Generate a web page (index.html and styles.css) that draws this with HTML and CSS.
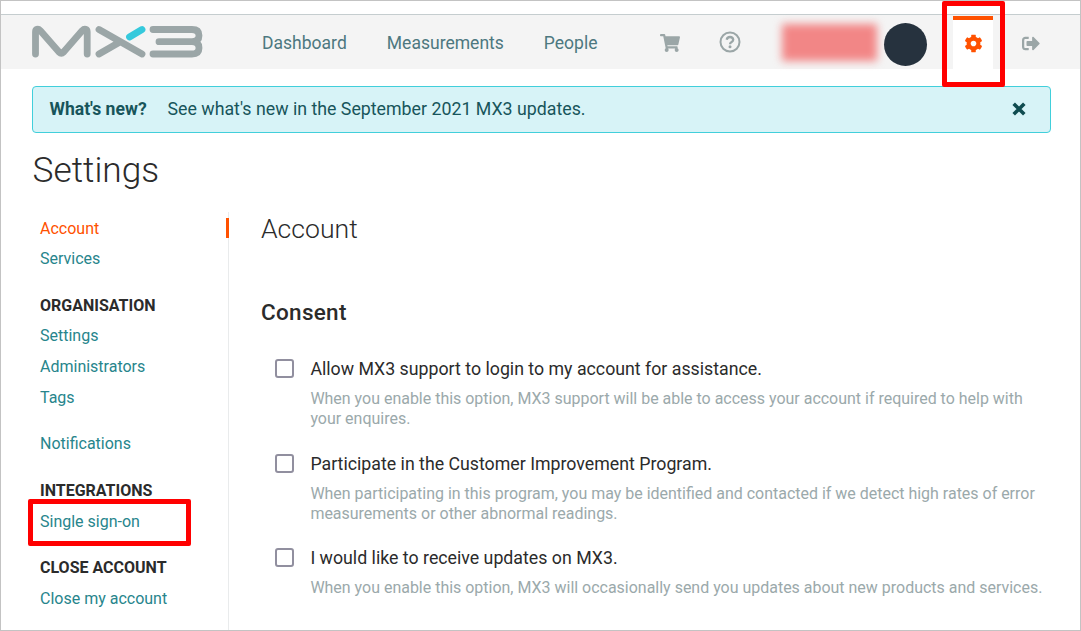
FILE: index.html
```html
<!DOCTYPE html>
<html lang="en">
<head>
<meta charset="utf-8">
<title>MX3 – Settings</title>
<link rel="stylesheet" href="styles.css">
</head>
<body>
<div class="frame">
  <header class="topbar">
    <svg class="logo" width="172" height="34" viewBox="0 0 172 34" fill="none" stroke="#9ba6a7" stroke-width="6.800" stroke-linecap="round" stroke-linejoin="round">
      <path d="M3.500 29V7C3.500 4 6 3.200 8.200 5.500L27 27Q29.300 29.300 31.600 27L50.300 5.500C52.500 3.200 55.200 4 55.200 7V29"/>
      <path d="M67 4.500L110 29M67 29L87 17.500"/>
      <path d="M97.500 12L110 4.500" stroke="#35c9dc"/>
      <path d="M121 4.500H160Q167 4.500 167 10.500Q167 16.700 160 16.700H127M160 16.700Q167 16.700 167 23Q167 29 160 29H121"/>
    </svg>
    <nav class="nav">
      <a class="dashboard">Dashboard</a>
      <a class="measurements">Measurements</a>
      <a class="people">People</a>
    </nav>
    <div class="tools">
      <svg class="cart" width="20" height="18" viewBox="0 0 576 512" fill="#9ba6a7"><path d="M528.120 301.319l47.273-208C578.806 78.301 567.391 64 551.990 64H159.208l-9.166-44.810C147.758 8.021 137.930 0 126.529 0H24C10.745 0 0 10.745 0 24v16c0 13.255 10.745 24 24 24h69.883l70.248 343.435C147.325 417.100 136 435.222 136 456c0 30.928 25.072 56 56 56s56-25.072 56-56c0-15.674-6.447-29.835-16.824-40h209.647C430.447 426.165 424 440.326 424 456c0 30.928 25.072 56 56 56s56-25.072 56-56c0-22.172-12.888-41.332-31.579-50.405l5.517-24.276c3.413-15.018-8.002-29.319-23.403-29.319H218.117l-6.545-32h293.145c11.206 0 20.920-7.754 23.403-18.681z"/></svg>
      <svg class="help" width="22" height="22" viewBox="0 0 22 22" fill="none" stroke="#9ba6a7" stroke-width="2"><circle cx="11" cy="11" r="9.500"/><path stroke-width="2.300" d="M7.700 8.700Q8.200 6 11 6T14.200 8.700Q14.200 10 12.600 11Q11 11.900 11 13.300"/><circle cx="11" cy="15.700" r="1.500" fill="#9ba6a7" stroke="none"/></svg>
      <div class="username"></div>
      <div class="avatar"></div>
      <div class="tab">
        <svg width="17" height="19" viewBox="18 8 476 496" fill="#ff5100"><path d="M487.400 315.700l-42.600-24.600c4.300-23.200 4.300-47 0-70.200l42.600-24.600c4.900-2.800 7.100-8.600 5.500-14-11.100-35.600-30-67.800-54.700-94.600-3.800-4.100-10-5.100-14.800-2.300L380.800 110c-17.900-15.400-38.500-27.300-60.800-35.100V25.800c0-5.600-3.900-10.500-9.400-11.700-36.700-8.200-74.300-7.800-109.200 0-5.500 1.200-9.400 6.100-9.400 11.700V75c-22.200 7.900-42.800 19.800-60.800 35.100L88.700 85.500c-4.900-2.800-11-1.900-14.800 2.300-24.700 26.700-43.600 58.900-54.700 94.600-1.700 5.400.6 11.200 5.500 14L67.300 221c-4.300 23.200-4.300 47 0 70.200l-42.600 24.600c-4.900 2.800-7.100 8.600-5.500 14 11.100 35.600 30 67.800 54.700 94.600 3.800 4.100 10 5.100 14.800 2.300l42.600-24.600c17.900 15.400 38.500 27.300 60.800 35.100v49.200c0 5.600 3.900 10.500 9.400 11.700 36.700 8.200 74.300 7.800 109.200 0 5.500-1.200 9.400-6.100 9.400-11.700v-49.200c22.200-7.900 42.800-19.800 60.800-35.100l42.600 24.600c4.900 2.800 11 1.900 14.800-2.300 24.700-26.700 43.600-58.900 54.700-94.600 1.500-5.500-.7-11.300-5.600-14.100zM256 336c-44.100 0-80-35.900-80-80s35.900-80 80-80 80 35.900 80 80-35.900 80-80 80z"/></svg>
      </div>
      <svg class="exit" width="18" height="15" viewBox="0 64 512 384" fill="#9ba6a7"><path d="M497 273L329 441c-15 15-41 4.500-41-17v-96H152c-13.300 0-24-10.700-24-24v-96c0-13.300 10.700-24 24-24h136V88c0-21.400 25.900-32 41-17l168 168c9.300 9.400 9.300 24.600 0 34zM192 436v-40c0-6.600-5.400-12-12-12H96c-17.700 0-32-14.300-32-32V160c0-17.700 14.300-32 32-32h84c6.600 0 12-5.400 12-12V76c0-6.600-5.400-12-12-12H96c-53 0-96 43-96 96v192c0 53 43 96 96 96h84c6.600 0 12-5.400 12-12z"/></svg>
    </div>
  </header>
  <div class="notice">
    <strong>What's new?</strong>
    <span>See what's new in the September 2021 MX3 updates.</span>
    <svg class="close" width="14" height="14" viewBox="0 0 14 14" stroke="#0f4c50" stroke-width="3.600"><path d="M1.700 1.700L12.300 12.300M12.300 1.700L1.700 12.300"/></svg>
  </div>
  <h1>Settings</h1>
  <div class="columns">
    <aside class="side">
      <ul><li class="active"><a>Account</a></li><li><a>Services</a></li></ul>
      <ul><li class="head">ORGANISATION</li><li><a>Settings</a></li><li><a>Administrators</a></li><li><a>Tags</a></li></ul>
      <ul><li><a>Notifications</a></li></ul>
      <ul><li class="head">INTEGRATIONS</li><li><a>Single sign-on</a></li></ul>
      <ul><li class="head">CLOSE ACCOUNT</li><li><a>Close my account</a></li></ul>
    </aside>
    <main class="content">
      <h2>Account</h2>
      <h3>Consent</h3>
      <section class="option">
        <i class="box"></i>
        <div><h4>Allow MX3 support to login to my account for assistance.</h4>
        <p>When you enable this option, MX3 support will be able to access your account if required to help with<br>your enquires.</p></div>
      </section>
      <section class="option">
        <i class="box"></i>
        <div><h4>Participate in the Customer Improvement Program.</h4>
        <p>When participating in this program, you may be identified and contacted if we detect high rates of error<br>measurements or other abnormal readings.</p></div>
      </section>
      <section class="option">
        <i class="box"></i>
        <div><h4>I would like to receive updates on MX3.</h4>
        <p>When you enable this option, MX3 will occasionally send you updates about new products and services.</p></div>
      </section>
    </main>
  </div>
  <div class="mark mark-gear"></div>
  <div class="mark mark-sso"></div>
</div>
</body>
</html>
```
FILE: styles.css
```css
* { box-sizing: border-box; }
body { margin: 0; font-family: Roboto, "Liberation Sans", sans-serif; color: #2b2b2b; background: #fff; }
h1, h2, h3, h4, p, ul { margin: 0; padding: 0; font-weight: 400; white-space: nowrap; }
svg { display: block; flex: none; }
.frame { position: relative; width: 1081px; height: 631px; border: 1px solid #c3c3c3; padding-top: 13px; overflow: hidden; }

.topbar { display: flex; height: 55px; background: #f4f4f4; border-top: 1px solid #c5cdcf; padding-left: 31px; }
.logo { margin-top: 10px; }
.nav { display: flex; flex: none; width: 425px; padding-left: 58px; gap: 40px; line-height: 56px; font-size: 17.550px; color: #4d7880; }
.tools { display: flex; flex: none; }
.cart { margin: 19px 0 0 31px; }
.help { margin: 16px 0 0 39px; }
.username { width: 95px; height: 37px; margin: 9px 0 0 41px; background: #f28686; filter: blur(4px); }
.avatar { width: 43px; height: 43px; margin: 8px 0 0 6.500px; border-radius: 50%; background: #26323e; }
.tab { width: 40px; height: 54px; margin: 1px 0 0 26.500px; padding: 13.500px 0 0 12px; background: #fff; border-top: 4px solid #ff5100; }
.exit { margin: 21px 0 0 28.500px; }

.notice { display: flex; align-items: center; width: 1019px; height: 47px; margin: 16.500px 0 0 31px; padding: 0 24px 1px 16.500px; border: 1px solid #41cfdb; border-radius: 4px; background: #d7f3f7; color: #17555b; font-size: 17.780px; }
.notice strong { width: 118px; font-size: 17.600px; font-weight: 700; }
.close { margin-left: auto; }

h1 { margin: 15px 0 0 31.500px; height: 44px; line-height: 44px; font-size: 35.300px; font-weight: 300; }
.columns { display: flex; margin: 20px 0 0 39px; }
.side { width: 189px; height: 430px; padding-top: 2px; border-right: 1px solid #e9ebec; font-size: 16px; color: #27858c; }
.side ul { margin-bottom: 15.700px; list-style: none; }
.side li { height: 30.750px; line-height: 30.750px; }
.side .active { display: flex; justify-content: space-between; color: #ff5100; }
.side .active::after { content: ""; width: 3px; height: 20px; margin: 4px -1px 0 0; background: #ff5100; }
.side .head { font-weight: 700; color: #2b2b2b; }

.content { padding-left: 32px; }
h2 { height: 33px; line-height: 33px; font-size: 26.600px; font-weight: 300; }
h3 { height: 30px; margin-top: 52.500px; line-height: 30px; font-size: 22.500px; letter-spacing: .3px; font-weight: 500; }
.option { display: flex; gap: 16px; height: 94.700px; padding-left: 14.400px; }
h3 + .option { margin-top: 31px; }
.box { width: 19px; height: 19px; margin-top: 1px; border: 2px solid #918f9f; border-radius: 3px; }
h4 { height: 22px; line-height: 22px; font-size: 17.760px; }
.option p { margin-top: 9px; line-height: 20.200px; font-size: 15.980px; color: #9ba9ab; }

.mark { position: absolute; border: 5px solid #f00; border-radius: 2px; }
.mark-gear { left: 941px; top: 0; width: 63px; height: 86px; }
.mark-sso { left: 27px; top: 498px; width: 163px; height: 47px; }
```
